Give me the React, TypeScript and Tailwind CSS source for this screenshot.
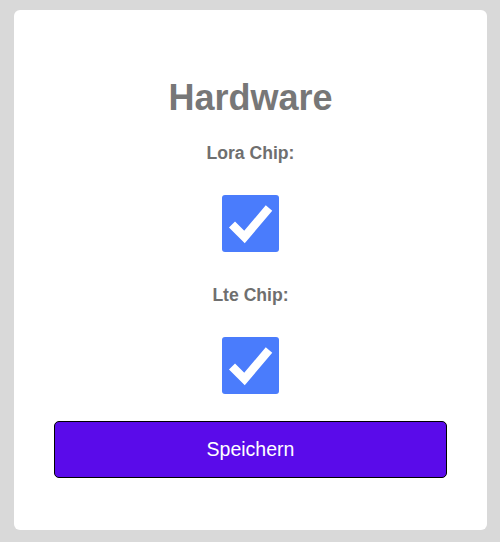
import React, { useState } from "react";

const CheckBox = (props: { checked: boolean; onToggle: () => void }) => {
    return (
        <button
            type="button"
            onClick={props.onToggle}
            className={`w-[57px] h-[57px] rounded-[3px] flex items-center justify-center ${props.checked ? "bg-[#4a7cfc]" : "bg-white border-2 border-[#767676]"}`}
        >
            {props.checked ? (
                <svg width="57" height="57" viewBox="0 0 57 57">
                    <path d="M10 29.5 L22.5 42 L47 13" fill="none" stroke="white" strokeWidth="8.5" strokeLinejoin="miter" strokeLinecap="butt" />
                </svg>
            ) : null}
        </button>
    );
};

const App = () => {
    const [lora, setLora] = useState(true);
    const [lte, setLte] = useState(true);

    return (
        <div className="w-[500px] h-[542px] bg-[#d9d9d9] pt-[10px] pl-[14px] font-['Liberation_Sans',Arial,sans-serif]">
            <div className="w-[473px] h-[520px] bg-white rounded-[6px] flex flex-col items-center pt-[68px]">
                <h1 className="text-[36px] leading-[40px] font-bold text-[#777777]">Hardware</h1>

                <label className="mt-[25px] text-[17.6px] leading-[20px] font-bold text-[#6f6f6f]">Lora Chip:</label>
                <div className="mt-[32px]">
                    <CheckBox checked={lora} onToggle={() => setLora(!lora)} />
                </div>

                <label className="mt-[33px] text-[17.6px] leading-[20px] font-bold text-[#6f6f6f]">Lte Chip:</label>
                <div className="mt-[32px]">
                    <CheckBox checked={lte} onToggle={() => setLte(!lte)} />
                </div>

                <button
                    type="button"
                    className="mt-[27px] w-[393px] h-[57px] bg-[#5a0bea] border border-black rounded-[5px] text-white text-[19.5px]"
                >
                    Speichern
                </button>
            </div>
        </div>
    );
};

export default App;
